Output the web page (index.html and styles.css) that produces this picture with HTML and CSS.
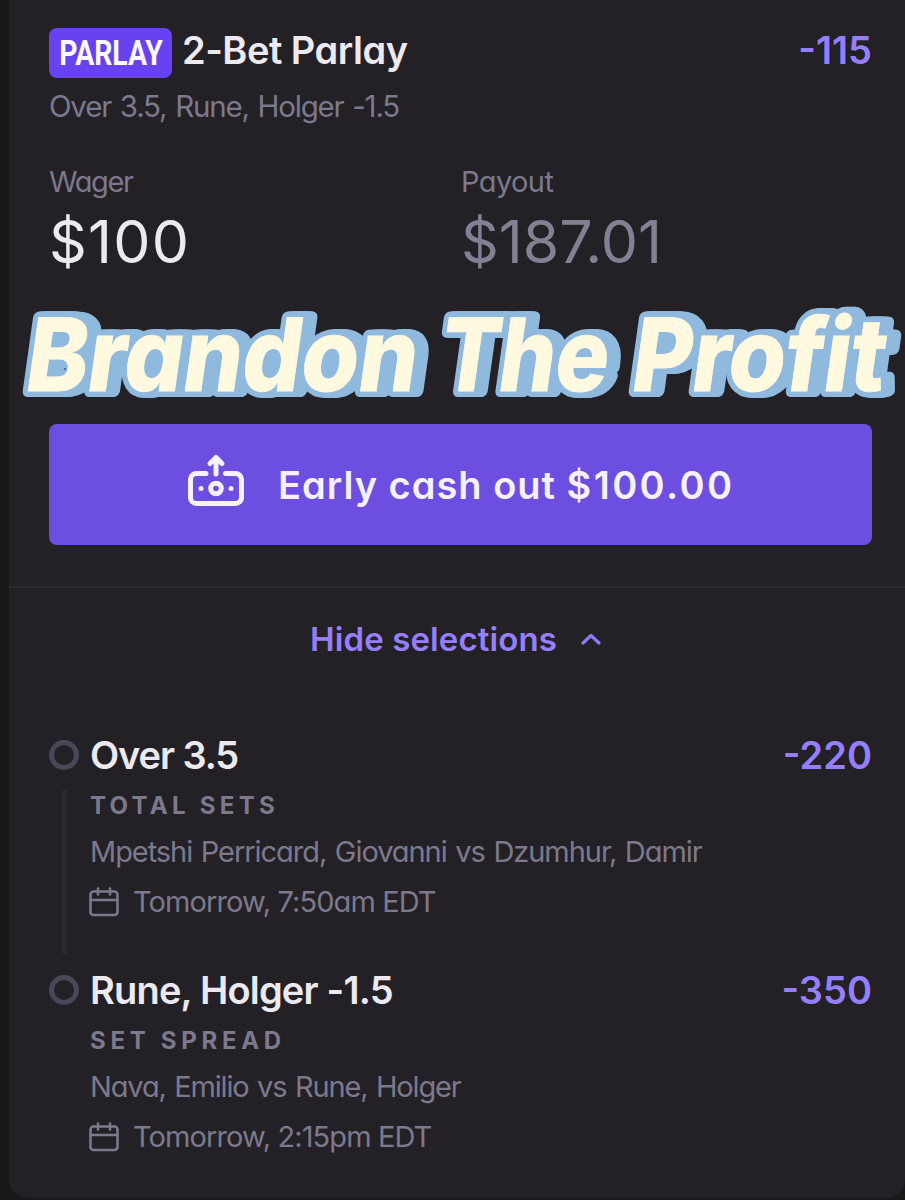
FILE: index.html
```html
<!DOCTYPE html>
<html lang="en">
<head>
  <meta charset="UTF-8" />
  <meta name="viewport" content="width=device-width, initial-scale=1.0" />
  <title>2-Bet Parlay</title>
  <link rel="stylesheet" href="styles.css">
</head>
<body>
  <main class="card">
    <header class="bet-header">
      <span class="badge"><span class="badge-text">PARLAY</span></span>
      <h1 class="bet-title">2-Bet Parlay</h1>
      <span class="odds odds-total">-115</span>
    </header>
    <p class="bet-summary">Over 3.5, Rune, Holger -1.5</p>

    <div class="amounts">
      <div class="amount wager">
        <div class="label">Wager</div>
        <div class="value">$100</div>
      </div>
      <div class="amount payout">
        <div class="label">Payout</div>
        <div class="value">$187.01</div>
      </div>
    </div>

    <svg class="banner" viewBox="0 0 896 120" width="896" height="120" aria-label="Brandon The Profit">
      <defs>
        <g id="words" transform="translate(0 100) skewX(-8)">
          <text x="14" y="0" textLength="391" lengthAdjust="spacingAndGlyphs">Brandon</text>
          <text x="427" y="0" textLength="169" lengthAdjust="spacingAndGlyphs">The</text>
          <text x="620" y="0" textLength="253" lengthAdjust="spacingAndGlyphs">Profit</text>
        </g>
      </defs>
      <g class="banner-edge">
        <use href="#words" x="0" />
        <use href="#words" x="2" />
        <use href="#words" x="4" />
        <use href="#words" x="6" />
        <use href="#words" x="8" />
        <use href="#words" x="9" />
      </g>
      <path class="banner-fill" d="M45 72h22v12H45z" />
      <use class="banner-face" href="#words" />
      <circle cx="56" cy="78" r="1" fill="#2a5a7c" />
    </svg>

    <button class="cashout">
      <svg class="cash-icon" viewBox="0 0 58 54" width="58" height="54" fill="none" stroke="#f6f1ff" stroke-width="5" stroke-linecap="round" stroke-linejoin="round">
        <path d="M19 20.500H9.500a6 6 0 0 0-6 6v18a6 6 0 0 0 6 6h39a6 6 0 0 0 6-6v-18a6 6 0 0 0-6-6H38.500" />
        <path d="M29 21V5.500M23 10.500l6-6 6 6" />
        <circle cx="29" cy="35.500" r="5.300" />
        <circle cx="14" cy="35.500" r="2.500" fill="#f6f1ff" stroke="none" />
        <circle cx="44" cy="35.500" r="2.500" fill="#f6f1ff" stroke="none" />
      </svg>
      <span class="cashout-text">Early cash out <span class="cashout-amount">$100.00</span></span>
    </button>

    <div class="toggle">
      <span class="toggle-text">Hide selections</span>
      <svg class="chevron" viewBox="0 0 20 14" width="20" height="14" fill="none" stroke="#8f7af5" stroke-width="3.200" stroke-linecap="round" stroke-linejoin="round">
        <path d="M2 11l8-7.500 8 7.500" />
      </svg>
    </div>

    <section class="legs">
      <article class="leg">
        <div class="track">
          <span class="dot"></span>
          <span class="line"></span>
        </div>
        <div class="leg-body">
          <div class="leg-head">
            <h2 class="pick pick-over">Over 3.5</h2>
            <span class="odds">-220</span>
          </div>
          <div class="market">TOTAL SETS</div>
          <div class="match">Mpetshi Perricard, Giovanni vs Dzumhur, Damir</div>
          <div class="time">
            <svg class="calendar" viewBox="0 0 30 30" width="30" height="30" fill="none" stroke="#7c798d" stroke-width="2.600" stroke-linecap="round" stroke-linejoin="round">
              <rect x="1.500" y="4.500" width="27" height="23.500" rx="3" />
              <path d="M1.500 13h27M9 1.500v6M21 1.500v6" />
            </svg>
            <span class="time-text">Tomorrow, 7:50am EDT</span>
          </div>
        </div>
      </article>

      <article class="leg">
        <div class="track">
          <span class="dot"></span>
        </div>
        <div class="leg-body">
          <div class="leg-head">
            <h2 class="pick">Rune, Holger -1.5</h2>
            <span class="odds">-350</span>
          </div>
          <div class="market market-spread">SET SPREAD</div>
          <div class="match match-short">Nava, Emilio vs Rune, Holger</div>
          <div class="time">
            <svg class="calendar" viewBox="0 0 30 30" width="30" height="30" fill="none" stroke="#7c798d" stroke-width="2.600" stroke-linecap="round" stroke-linejoin="round">
              <rect x="1.500" y="4.500" width="27" height="23.500" rx="3" />
              <path d="M1.500 13h27M9 1.500v6M21 1.500v6" />
            </svg>
            <span class="time-text">Tomorrow, 2:15pm EDT</span>
          </div>
        </div>
      </article>
    </section>
  </main>
</body>
</html>
```
FILE: styles.css
```css
* {
  box-sizing: border-box;
}
body {
  margin: 0;
  padding-left: 9px;
  height: 1200px;
  overflow: hidden;
  background: #19171a;
  color: #ece9f1;
  font-family: Inter, "Liberation Sans", sans-serif;
  font-feature-settings: "cv11";
}
h1, h2, p {
  margin: 0;
}
.card {
  height: 1198px;
  padding-top: 25px;
  background: #232126;
  border-radius: 0 0 18px 18px;
}
.bet-header {
  display: flex;
  align-items: center;
  height: 50px;
  padding: 0 33px 0 40px;
}
.badge {
  display: flex;
  align-items: center;
  justify-content: center;
  width: 123px;
  height: 50px;
  margin-top: 6px;
  border-radius: 8px;
  background: #6642f0;
  color: #fbf8ff;
}
.badge-text {
  font-family: Roboto, sans-serif;
  font-size: 35px;
  font-weight: 700;
  line-height: 50px;
  padding-top: 2px;
  transform: scaleX(0.81);
}
.bet-title {
  margin-left: 10px;
  font-size: 38px;
  font-weight: 600;
  line-height: 50px;
  letter-spacing: -0.5px;
}
.odds {
  margin-left: auto;
  font-size: 38px;
  font-weight: 600;
  line-height: 50px;
  color: #957fff;
}
.bet-summary {
  padding: 12px 0 0 40px;
  font-size: 29.5px;
  line-height: 38px;
  letter-spacing: -1.2px;
  word-spacing: 1.7px;
  color: #7c798d;
}
.amounts {
  display: grid;
  grid-template-columns: 412px 1fr;
  padding: 38px 0 0 40px;
}
.label {
  font-size: 29px;
  line-height: 38px;
  letter-spacing: -0.6px;
  color: #7c798d;
}
.value {
  margin-top: 6px;
  font-size: 59px;
  line-height: 70px;
}
.wager .label {
  letter-spacing: -1.4px;
}
.wager .value {
  letter-spacing: 1.2px;
}
.payout .value {
  letter-spacing: 0;
  color: #838094;
}
.banner {
  display: block;
  margin-top: 14px;
  font-family: Inter, sans-serif;
  font-size: 101px;
  font-weight: 800;
}
.banner-edge {
  fill: #90b9de;
  stroke: #90b9de;
  stroke-width: 12px;
  stroke-linejoin: round;
}
.banner-fill {
  fill: #90b9de;
}
.banner-face {
  fill: #fff9e0;
  stroke: #fff9e0;
  stroke-width: 0.8px;
}
.cashout {
  display: flex;
  align-items: center;
  width: 823px;
  height: 121px;
  margin: 13px 0 0 40px;
  padding: 0 0 0 138px;
  border: none;
  border-radius: 8px;
  background: #6c4fe0;
  color: #f6f1ff;
  font-family: inherit;
}
.cash-icon {
  margin-top: -10px;
}
.cashout-text {
  margin-left: 33px;
  font-size: 38px;
  font-weight: 600;
  font-feature-settings: "cv11";
  letter-spacing: 1px;
  white-space: nowrap;
}
.cashout-amount {
  letter-spacing: 2.4px;
}
.toggle {
  display: flex;
  align-items: center;
  justify-content: center;
  height: 104px;
  margin-top: 41px;
  padding-right: 3px;
  border-top: 2px solid #2c2b30;
  color: #957fff;
}
.toggle-text {
  font-size: 33px;
  font-weight: 600;
  letter-spacing: 0.1px;
}
.chevron {
  margin-left: 24px;
}
.legs {
  padding: 40px 33px 0 40px;
}
.leg {
  display: flex;
  height: 235px;
}
.track {
  display: flex;
  flex-direction: column;
  align-items: center;
  width: 30px;
  padding-top: 10px;
}
.dot {
  width: 30px;
  height: 30px;
  border: 5px solid #4a4757;
  border-radius: 50%;
}
.line {
  width: 5px;
  height: 164px;
  margin-top: 20px;
  background: #2b292e;
}
.leg-body {
  flex: 1;
  padding-left: 11px;
}
.leg-head {
  display: flex;
}
.pick {
  font-size: 38px;
  font-weight: 600;
  line-height: 50px;
  letter-spacing: -0.8px;
}
.pick-over {
  letter-spacing: -1.1px;
}
.market {
  margin-top: 11px;
  font-size: 24px;
  font-weight: 700;
  line-height: 30px;
  letter-spacing: 4.3px;
  color: #7c798d;
}
.market-spread {
  letter-spacing: 4.7px;
}
.match {
  margin-top: 11px;
  font-size: 29px;
  line-height: 40px;
  letter-spacing: -1.05px;
  word-spacing: 1.5px;
  color: #7c798d;
  white-space: nowrap;
}
.match-short {
  letter-spacing: -1.15px;
}
.time {
  display: flex;
  align-items: center;
  margin-top: 10px;
  margin-left: -1px;
  color: #7c798d;
}
.time-text {
  margin-left: 14px;
  font-size: 29px;
  line-height: 40px;
  letter-spacing: -0.9px;
}
```
